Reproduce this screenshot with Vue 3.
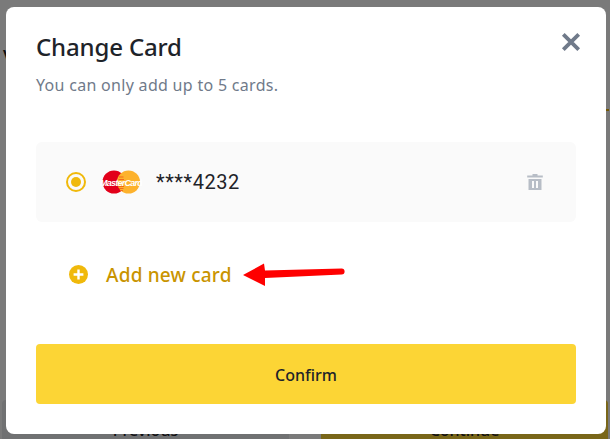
<script setup>
const title = 'Change Card'
const note = 'You can only add up to 5 cards.'
</script>

<template>
  <div class="screen">
    <div class="page" aria-hidden="true">
      <span class="page-letter">V</span>
      <div class="page-edge"></div>
      <div class="page-actions">
        <div class="page-btn">Previous</div>
        <div class="page-btn primary">Continue</div>
      </div>
    </div>
    <div class="backdrop"></div>
    <section class="modal">
      <button class="close" aria-label="Close">
        <svg viewBox="0 0 20 20" width="20" height="20">
          <path d="M2.300 2.300 17.700 17.700M17.700 2.300 2.300 17.700" stroke="#707A8A" stroke-width="3.800" fill="none" />
        </svg>
      </button>
      <h1 class="title">{{ title }}</h1>
      <p class="note">{{ note }}</p>

      <div class="card-row">
        <span class="radio"><span class="radio-dot"></span></span>
        <svg class="brand" viewBox="-2 0 42 24" width="42" height="24">
          <circle cx="12" cy="12" r="11.500" fill="#E2001A" />
          <circle cx="26.500" cy="12" r="11.500" fill="#FDB22D" />
          <path d="M17 7h4.500M16.500 9.500h5.500M16 16.500h6M17 18.500h4.500M18 20.500h3" stroke="#F26A1B" stroke-width="1" />
          <text x="19" y="15.500" class="brand-text" text-anchor="middle">MasterCard</text>
        </svg>
        <span class="number">****4232</span>
        <svg class="trash" viewBox="0 0 18 18" width="18" height="18">
          <path d="M6.500 1h5v1.400h5.300v2.200H1.200V2.400h5.300zM2.500 6h13v11h-13zM6 8v7h2V8zm4 0v7h2V8z" fill="#B7BDC6" fill-rule="evenodd" />
        </svg>
      </div>

      <div class="add-row">
        <svg viewBox="0 0 19 19" width="19" height="19">
          <circle cx="9.500" cy="9.500" r="9.500" fill="#F0B90B" />
          <path d="M9.500 4.600v9.800M4.600 9.500h9.800" stroke="#fff" stroke-width="2.400" />
        </svg>
        <span class="add-label">Add new card</span>
        <svg class="arrow" viewBox="0 0 104 26" width="104" height="26">
          <path d="M0 14 21 2.500 22 9.500 98.500 7.500a3 3 0 0 1 .2 6L22 17 22 25z" fill="#FE0000" />
        </svg>
      </div>

      <button class="confirm">Confirm</button>
    </section>
  </div>
</template>

<style scoped>
.screen {
  position: relative;
  width: 610px;
  height: 439px;
  overflow: hidden;
  background: #fff;
  font-family: "Noto Sans", "Open Sans", sans-serif;
  box-sizing: border-box;
  padding: 7px 4px 5px 6px;
}
.page {
  position: absolute;
  inset: 0;
}
.page-letter {
  position: absolute;
  left: 3px;
  top: 43px;
  font-size: 20px;
  font-weight: 500;
  color: #1e2329;
}
.page-edge {
  position: absolute;
  left: 606px;
  top: 109px;
  width: 3px;
  height: 2px;
  background: #f0b90b;
}
.page-actions {
  position: absolute;
  left: 2px;
  right: 2px;
  top: 400px;
  height: 60px;
  display: flex;
  gap: 32px;
}
.page-btn {
  flex: 1;
  border-radius: 4px;
  text-align: center;
  font-size: 16px;
  font-weight: 500;
  line-height: 60px;
  color: #1e2329;
  background: #eaecef;
}
.page-btn.primary {
  background: #fcd535;
}
.backdrop {
  position: absolute;
  inset: 0;
  background: rgba(0, 0, 0, 0.52);
}
.modal {
  position: relative;
  width: 600px;
  height: 427px;
  box-sizing: border-box;
  padding: 23px 30px 30px;
  background: #fff;
  border-radius: 8px;
  display: flex;
  flex-direction: column;
}
.close {
  position: absolute;
  top: 25px;
  right: 25px;
  width: 20px;
  height: 20px;
  padding: 0;
  border: 0;
  background: none;
  display: flex;
}
.title {
  margin: 0;
  font-size: 24px;
  line-height: 34px;
  font-weight: 500;
  letter-spacing: -0.15px;
  color: #1e2329;
}
.note {
  margin: 9px 0 0;
  font-size: 16px;
  line-height: 24px;
  letter-spacing: 0.3px;
  color: #707a8a;
}
.card-row {
  margin-top: 45px;
  height: 80px;
  flex: none;
  display: flex;
  align-items: center;
  padding: 0 32px 0 30px;
  background: #fafafa;
  border-radius: 6px;
}
.radio {
  width: 20px;
  height: 20px;
  box-sizing: border-box;
  border: 2px solid #f0b90b;
  border-radius: 50%;
  display: flex;
  align-items: center;
  justify-content: center;
}
.radio-dot {
  width: 10px;
  height: 10px;
  border-radius: 50%;
  background: #f0b90b;
}
.brand {
  margin-left: 14px;
}
.brand-text {
  font-family: "Liberation Sans", sans-serif;
  font-size: 9px;
  font-weight: 700;
  font-style: italic;
  letter-spacing: -0.75px;
  fill: #fff;
}
.number {
  margin-left: 14px;
  flex: 1;
  font-family: Roboto, sans-serif;
  font-size: 20px;
  letter-spacing: 0.55px;
  color: #1e2329;
}
.add-row {
  margin-top: 39px;
  height: 26px;
  display: flex;
  align-items: center;
  padding-left: 33px;
}
.add-label {
  margin: 1px 0 0 18px;
  font-size: 19px;
  font-weight: 500;
  letter-spacing: 0.2px;
  color: #c99400;
}
.arrow {
  margin-left: 11px;
}
.confirm {
  margin-top: auto;
  height: 60px;
  flex: none;
  border: 0;
  border-radius: 4px;
  background: #fcd535;
  padding: 2px 0 0;
  font-family: inherit;
  font-size: 16px;
  font-weight: 500;
  color: #1e2329;
}
</style>
